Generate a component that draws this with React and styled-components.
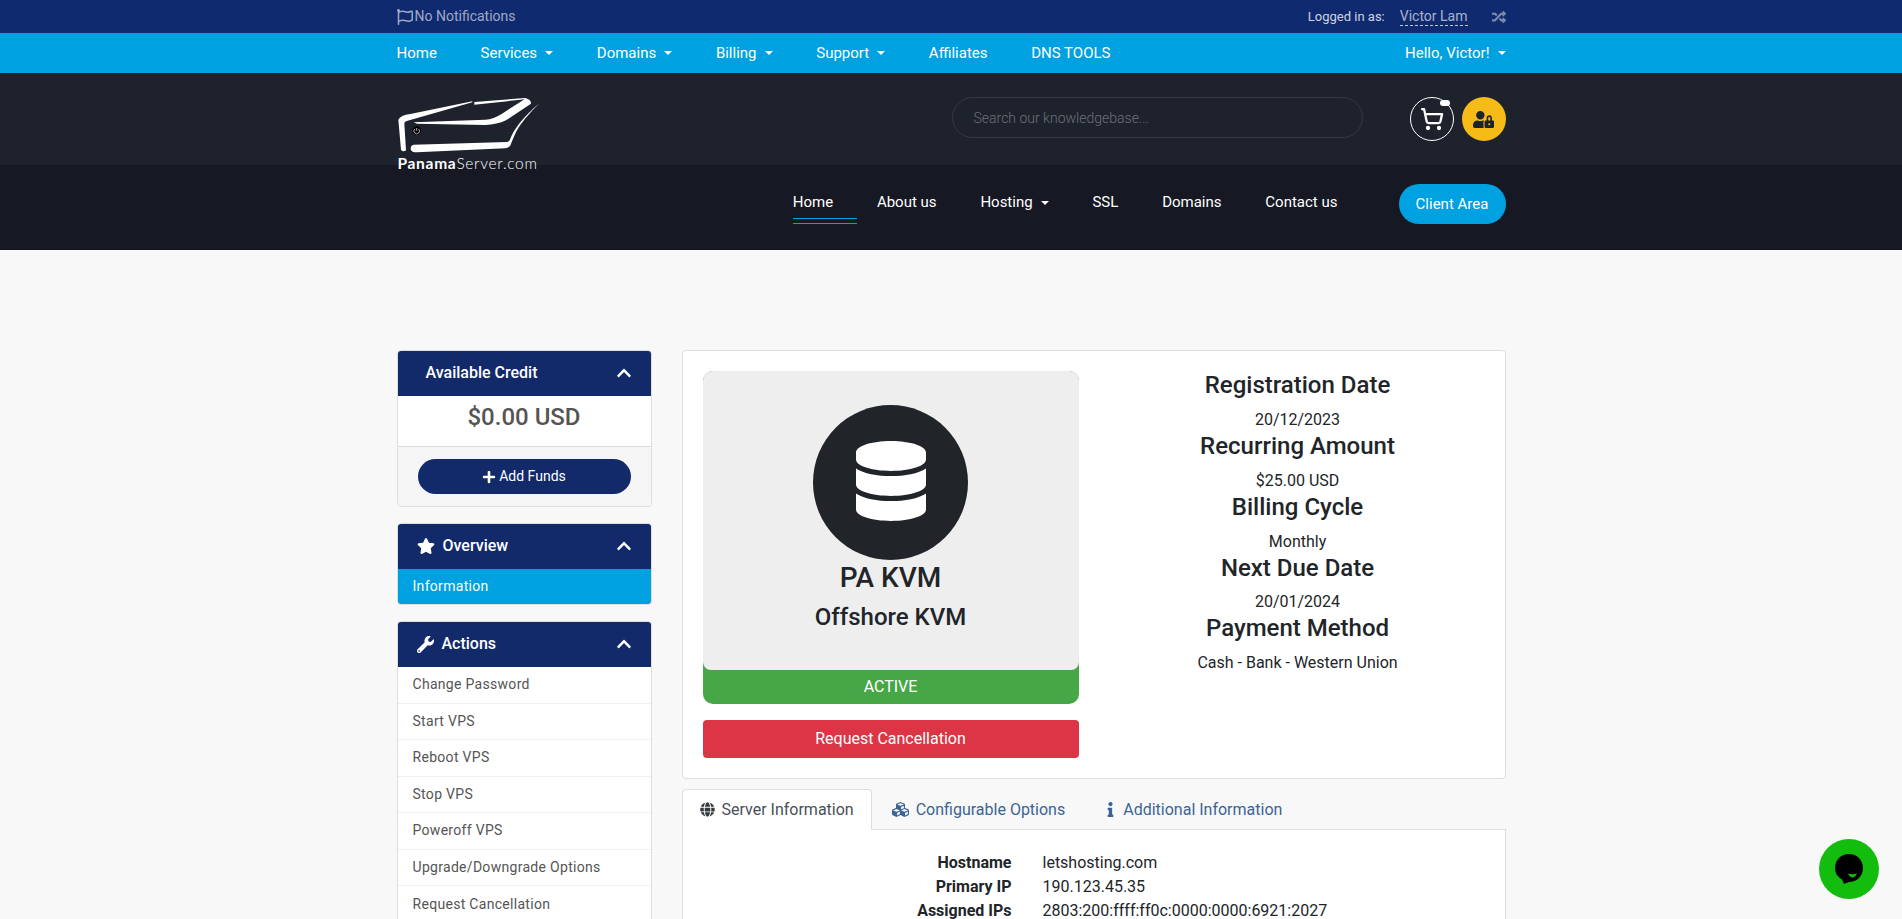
import React from 'react';
import styled, { createGlobalStyle } from 'styled-components';
import {
  FaRegFlag,
  FaRandom,
  FaUserLock,
  FaPlus,
  FaStar,
  FaWrench,
  FaChevronUp,
  FaDatabase,
  FaGlobe,
  FaCubes,
  FaInfo,
} from 'react-icons/fa';
import { ShoppingCart } from 'lucide-react';

const mainMenu = [
  { label: 'Home' },
  { label: 'Services', caret: true },
  { label: 'Domains', caret: true },
  { label: 'Billing', caret: true },
  { label: 'Support', caret: true },
  { label: 'Affiliates' },
  { label: 'DNS TOOLS' },
];

const siteMenu = [
  { label: 'Home', active: true },
  { label: 'About us' },
  { label: 'Hosting', caret: true },
  { label: 'SSL' },
  { label: 'Domains' },
  { label: 'Contact us' },
];

const actions = [
  'Change Password',
  'Start VPS',
  'Reboot VPS',
  'Stop VPS',
  'Poweroff VPS',
  'Upgrade/Downgrade Options',
  'Request Cancellation',
];

const billing = [
  ['Registration Date', '20/12/2023'],
  ['Recurring Amount', '$25.00 USD'],
  ['Billing Cycle', 'Monthly'],
  ['Next Due Date', '20/01/2024'],
  ['Payment Method', 'Cash - Bank - Western Union'],
];

const server = [
  ['Hostname', 'letshosting.com'],
  ['Primary IP', '190.123.45.35'],
  ['Assigned IPs', '2803:200:ffff:ff0c:0000:0000:6921:2027'],
];

function Logo() {
  return (
    <LogoWrap>
      <svg width="145" height="57" viewBox="20 20 435 171" fill="#fff">
        <path d="M246 33 L60 71 Q30 75 24 88 L32 178 Q38 187 47 180 L42 100 Q42 93 52 91 L246 36 Z" />
        <path d="M252 35 L405 23 L412 26 L252 43 Z" />
        <path d="M70 96 L285 88 Q310 86 335 70 L405 25 Q422 25 422 40 L347 90 Q320 103 285 104 L80 100 Z" />
        <path d="M448 38 Q395 90 377 125 L364 155 L350 158 L358 150 Q375 100 448 38 Z" />
        <path d="M70 163 L350 155 L364 153 Q362 172 345 174 L80 186 Q61 186 61 175 Q61 164 70 163 Z" />
        <circle cx="79" cy="121" r="13" fill="#000" />
        <path d="M79 113 V121 M73 116 A8.5 8.5 0 1 0 85 116" fill="none" stroke="#fff" strokeWidth="2" />
      </svg>
      <LogoText>
        <b>Panama</b>Server.com
      </LogoText>
    </LogoWrap>
  );
}

function ChatBubble() {
  return (
    <svg width="30" height="32" viewBox="0 0 30 32">
      <path d="M15 1 C7 1 1 7 1 15 C1 20 3.5 24 8 26.5 L10 31 L15 29 C23 29 29 23 29 15 C29 7 23 1 15 1 Z" fill="#000" />
      <path d="M14 20.5 Q18.5 22 23 20.5 Q21 24.5 18.5 24.5 Q16 24.5 14 20.5 Z" fill="#13bd0d" />
    </svg>
  );
}

export default function App() {
  return (
    <>
      <GlobalStyle />
      <TopBar>
        <Container>
          <Notice>
            <FaRegFlag size={16} /> No Notifications
          </Notice>
          <Account>
            Logged in as: <AccountName>Victor Lam</AccountName>
            <FaRandom size={14} color="#7f8bab" />
          </Account>
        </Container>
      </TopBar>

      <MainNav>
        <Container>
          <MenuList>
            {mainMenu.map((item) => (
              <MenuItem key={item.label}>
                {item.label}
                {item.caret && <Caret />}
              </MenuItem>
            ))}
          </MenuList>
          <MenuItem>
            Hello, Victor!
            <Caret />
          </MenuItem>
        </Container>
      </MainNav>

      <BrandBar>
        <Container>
          <Logo />
          <SearchBox placeholder="Search our knowledgebase..." />
          <CartButton>
            <ShoppingCart size={24} strokeWidth={2.3} />
            <CartDot />
          </CartButton>
          <LoginButton>
            <FaUserLock size={21} />
          </LoginButton>
        </Container>
      </BrandBar>

      <SiteNav>
        <SiteContainer>
          <SiteList>
            {siteMenu.map((item) => (
              <SiteLink key={item.label} $active={item.active}>
                {item.label}
                {item.caret && <Caret />}
              </SiteLink>
            ))}
          </SiteList>
          <ClientArea>Client Area</ClientArea>
        </SiteContainer>
      </SiteNav>

      <Page>
        <Sidebar>
          <Panel>
            <PanelHeader $indent="29px">
              <span>Available Credit</span>
              <FaChevronUp size={16} />
            </PanelHeader>
            <CreditAmount>$0.00 USD</CreditAmount>
            <PanelFooter>
              <AddFunds>
                <FaPlus size={14} /> Add Funds
              </AddFunds>
            </PanelFooter>
          </Panel>

          <Panel>
            <PanelHeader>
              <span>
                <FaStar size={18} /> Overview
              </span>
              <FaChevronUp size={16} />
            </PanelHeader>
            <PanelItem $active>Information</PanelItem>
          </Panel>

          <Panel>
            <PanelHeader>
              <span>
                <FaWrench size={17} /> Actions
              </span>
              <FaChevronUp size={16} />
            </PanelHeader>
            {actions.map((label) => (
              <PanelItem key={label}>{label}</PanelItem>
            ))}
          </Panel>
        </Sidebar>

        <Content>
          <ProductCard>
            <div>
              <StatusWrap>
                <ProductBox>
                  <ProductIcon>
                    <FaDatabase size={80} />
                  </ProductIcon>
                  <ProductName>PA KVM</ProductName>
                  <ProductGroup>Offshore KVM</ProductGroup>
                </ProductBox>
                <StatusLabel>ACTIVE</StatusLabel>
              </StatusWrap>
              <CancelButton>Request Cancellation</CancelButton>
            </div>
            <BillingList>
              {billing.map(([title, value]) => (
                <BillingRow key={title}>
                  <h4>{title}</h4>
                  <p>{value}</p>
                </BillingRow>
              ))}
            </BillingList>
          </ProductCard>

          <Tabs>
            <Tab $active>
              <FaGlobe size={15} color="#343a40" /> Server Information
            </Tab>
            <Tab>
              <FaCubes size={17} /> Configurable Options
            </Tab>
            <Tab $inset="19px" $iconGap="5px">
              <FaInfo size={15} /> Additional Information
            </Tab>
          </Tabs>
          <TabPane>
            {server.map(([label, value]) => (
              <React.Fragment key={label}>
                <ServerLabel>{label}</ServerLabel>
                <span>{value}</span>
              </React.Fragment>
            ))}
          </TabPane>
        </Content>
      </Page>

      <ChatButton>
        <ChatBubble />
      </ChatButton>
    </>
  );
}

const GlobalStyle = createGlobalStyle`
  html, body, #root {
    height: 919px;
    overflow: hidden;
  }
  body {
    margin: 0;
    background: #f8f8f8;
    color: #212529;
    font-family: Roboto, "Liberation Sans", sans-serif;
    font-size: 16px;
    line-height: 1.5;
  }
  * {
    box-sizing: border-box;
  }
`;

const Container = styled.div`
  width: 1109px;
  margin: 0 auto;
  height: 100%;
  display: flex;
  align-items: center;
  justify-content: space-between;
`;

const TopBar = styled.div`
  height: 33px;
  background: #102a70;
  font-size: 14px;
  color: rgba(255, 255, 255, 0.6);
`;

const Notice = styled.div`
  display: flex;
  align-items: center;
  gap: 2px;
`;

const Account = styled.div`
  display: flex;
  align-items: center;
  font-size: 13px;
  color: rgba(255, 255, 255, 0.8);
`;

const AccountName = styled.span`
  margin: 0 24px 0 15px;
  font-size: 14px;
  color: rgba(255, 255, 255, 0.65);
  border-bottom: 1px dashed rgba(255, 255, 255, 0.75);
  line-height: 17px;
`;

const MainNav = styled.div`
  height: 40px;
  background: #00a1e0;
  color: #fff;
`;

const MenuList = styled.div`
  display: flex;
  gap: 43.7px;
`;

const MenuItem = styled.div`
  display: flex;
  align-items: center;
  font-size: 15px;
  font-weight: 400;
`;

const Caret = styled.i`
  margin-left: 8px;
  border-top: 4.5px solid currentColor;
  border-left: 4.5px solid transparent;
  border-right: 4.5px solid transparent;
`;

const BrandBar = styled.div`
  height: 92px;
  background: #1e222d;

  ${Container} {
    align-items: flex-start;
    justify-content: flex-start;
    padding-top: 24px;
  }
`;

const LogoWrap = styled.div`
  position: relative;
  z-index: 1;
  width: 145px;

  svg {
    display: block;
  }
`;

const LogoText = styled.div`
  font-family: Lato, sans-serif;
  font-size: 15.5px;
  font-weight: 300;
  line-height: 14px;
  color: #fff;
  white-space: nowrap;
  letter-spacing: 0.7px;
  margin: 2px 0 0 1px;

  b {
    font-weight: 700;
  }
`;

const SearchBox = styled.input`
  width: 411px;
  height: 41px;
  margin-left: 410px;
  padding: 0 21px;
  background: transparent;
  border: 1px solid #343945;
  border-radius: 21px;
  color: #fff;
  font-family: inherit;
  font-size: 14px;
  font-weight: 300;
  outline: none;

  &::placeholder {
    color: #6c7078;
    opacity: 1;
  }
`;

const RoundButton = styled.div`
  position: relative;
  width: 44px;
  height: 44px;
  border-radius: 50%;
  display: flex;
  align-items: center;
  justify-content: center;
`;

const CartButton = styled(RoundButton)`
  margin-left: 47px;
  border: 1px solid #fff;
  color: #fff;
`;

const CartDot = styled.span`
  position: absolute;
  top: 2px;
  right: 3px;
  width: 10px;
  height: 6px;
  border-radius: 3px;
  background: #fff;
`;

const LoginButton = styled(RoundButton)`
  margin-left: 8px;
  background: #f6bb16;
  color: #1e222d;
`;

const SiteNav = styled.div`
  height: 85px;
  background: #161823;
`;

const SiteContainer = styled(Container)`
  justify-content: flex-end;
  padding-bottom: 7px;
`;

const SiteList = styled.div`
  display: flex;
  gap: 43.8px;
  margin-right: 61px;
`;

const SiteLink = styled.div`
  position: relative;
  display: flex;
  align-items: center;
  font-size: 15px;
  color: #fff;
  margin-bottom: 3px;

  ${(p) =>
    p.$active &&
    `
    &::after {
      content: '';
      position: absolute;
      left: 0;
      top: 27px;
      width: 64px;
      height: 4px;
      border-top: 1px solid #00a1e0;
      border-bottom: 1px solid #00a1e0;
    }
  `}
`;

const ClientArea = styled.div`
  width: 107px;
  height: 40px;
  border-radius: 20px;
  background: #00a1e0;
  color: #fff;
  font-size: 15px;
  display: flex;
  align-items: center;
  justify-content: center;
`;

const Page = styled.div`
  width: 1109px;
  margin: 0 auto;
  padding-top: 100px;
  display: flex;
  align-items: flex-start;
  gap: 30px;
`;

const Sidebar = styled.div`
  width: 255px;
  flex: none;
`;

const Panel = styled.div`
  margin-bottom: 16px;
  border: 1px solid #ddd;
  border-radius: 4px;
  background: #fff;
  overflow: hidden;
`;

const PanelHeader = styled.div`
  height: 46px;
  margin: -1px -1px 0;
  padding: 0 20px 0 ${(p) => p.$indent || '20px'};
  display: flex;
  align-items: center;
  justify-content: space-between;
  background: #12296a;
  color: #fff;
  font-size: 16px;
  font-weight: 500;

  span {
    display: flex;
    align-items: center;
    gap: 8px;
  }
`;

const CreditAmount = styled.div`
  height: 50px;
  padding-bottom: 8px;
  text-align: center;
  font-size: 24px;
  font-weight: 500;
  line-height: 42px;
  color: #555;
`;

const PanelFooter = styled.div`
  height: 60px;
  padding-top: 12px;
  background: #f5f5f5;
  border-top: 1px solid #ddd;
`;

const AddFunds = styled.div`
  width: 213px;
  height: 35px;
  margin: 0 auto;
  border-radius: 18px;
  background: #12296a;
  color: #fff;
  font-size: 14px;
  display: flex;
  align-items: center;
  justify-content: center;
  gap: 3px;
`;

const PanelItem = styled.div`
  height: ${(p) => (p.$active ? '35px' : '36.5px')};
  padding-left: 15px;
  display: flex;
  align-items: center;
  font-size: 14px;
  letter-spacing: 0.3px;
  background: ${(p) => (p.$active ? '#00a1e0' : '#fff')};
  color: ${(p) => (p.$active ? '#fff' : '#555')};
  border-bottom: 1px solid #f1f1f1;

  &:last-child {
    border-bottom: 0;
  }
`;

const Content = styled.div`
  flex: 1;
  min-width: 0;
`;

const ProductCard = styled.div`
  height: 429px;
  padding: 20px;
  display: grid;
  grid-template-columns: 376px 376px;
  justify-content: space-between;
  background: #fff;
  border: 1px solid #ddd;
  border-radius: 4px;
`;

const StatusWrap = styled.div`
  background: #47a747;
  border-radius: 10px;
  overflow: hidden;
`;

const ProductBox = styled.div`
  height: 299px;
  padding-top: 34px;
  background: #eee;
  border-radius: 8px;
  text-align: center;
`;

const ProductIcon = styled.div`
  width: 155px;
  height: 155px;
  margin: 0 auto;
  padding-bottom: 3px;
  border-radius: 50%;
  background: #212529;
  color: #fff;
  display: flex;
  align-items: center;
  justify-content: center;
`;

const ProductName = styled.h3`
  margin: -1px 0 0;
  font-size: 28px;
  font-weight: 500;
  line-height: 38px;
`;

const ProductGroup = styled.h4`
  margin: 2px 0 0;
  font-size: 24px;
  font-weight: 500;
  line-height: 36px;
`;

const StatusLabel = styled.div`
  height: 34px;
  color: #fff;
  text-align: center;
  line-height: 34px;
`;

const CancelButton = styled.div`
  height: 38px;
  margin-top: 16px;
  border-radius: 4px;
  background: #dc3545;
  color: #fff;
  text-align: center;
  line-height: 38px;
`;

const BillingList = styled.div`
  padding: 0.3px 0 0 2px;
`;

const BillingRow = styled.div`
  text-align: center;

  h4 {
    margin: 0 0 8px;
    font-size: 24px;
    font-weight: 500;
    line-height: 1.2;
  }

  p {
    margin: 0;
  }
`;

const Tabs = styled.div`
  margin-top: 10px;
  height: 41px;
  display: flex;
  border-bottom: 1px solid #ddd;
`;

const Tab = styled.div`
  height: 41px;
  padding: 0 17px 0 ${(p) => p.$inset || '17px'};
  margin-right: ${(p) => (p.$active ? '2px' : '0')};
  display: flex;
  align-items: center;
  gap: ${(p) => p.$iconGap || '7px'};
  color: ${(p) => (p.$active ? '#495057' : '#3b6494')};
  background: ${(p) => (p.$active ? '#fff' : 'transparent')};
  border: 1px solid ${(p) => (p.$active ? '#ddd' : 'transparent')};
  border-bottom-color: ${(p) => (p.$active ? '#fff' : 'transparent')};
  border-radius: 4px 4px 0 0;
`;

const TabPane = styled.div`
  height: 300px;
  padding: 21px 0 0;
  display: grid;
  grid-template-columns: 329px 1fr;
  grid-auto-rows: 24px;
  column-gap: 31px;
  align-content: start;
  background: #fff;
  border: 1px solid #ddd;
  border-top: 0;
`;

const ServerLabel = styled.span`
  font-weight: 700;
  text-align: right;
`;

const ChatButton = styled.div`
  position: fixed;
  left: 1819px;
  top: 839px;
  width: 60px;
  height: 60px;
  border-radius: 50%;
  background: #13bd0d;
  display: flex;
  align-items: center;
  justify-content: center;
`;
